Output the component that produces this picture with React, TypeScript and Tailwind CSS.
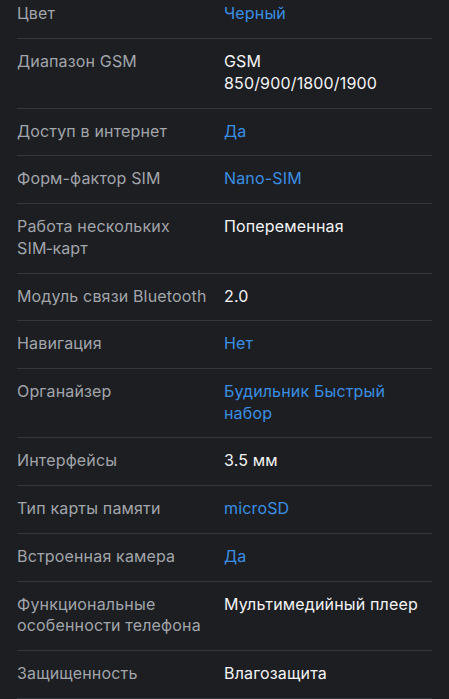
import React from "react";

type Row = { label: string; value: React.ReactNode; link?: boolean };

const rows: Row[] = [
  { label: "Цвет", value: "Черный", link: true },
  {
    label: "Диапазон GSM",
    value: (
      <>
        GSM
        <br />
        850/900/1800/1900
      </>
    ),
  },
  { label: "Доступ в интернет", value: "Да", link: true },
  { label: "Форм-фактор SIM", value: "Nano-SIM", link: true },
  { label: "Работа нескольких SIM\u2011карт", value: "Попеременная" },
  { label: "Модуль связи Bluetooth", value: "2.0" },
  { label: "Навигация", value: "Нет", link: true },
  { label: "Органайзер", value: "Будильник Быстрый набор", link: true },
  { label: "Интерфейсы", value: "3.5 мм" },
  { label: "Тип карты памяти", value: "microSD", link: true },
  { label: "Встроенная камера", value: "Да", link: true },
  { label: "Функциональные особенности телефона", value: "Мультимедийный плеер" },
  { label: "Защищенность", value: "Влагозащита" },
];

export default function App() {
  return (
    <div
      className="w-[449px] h-[699px] overflow-hidden bg-[#1c1e22] px-[17px]"
      style={{ fontFamily: "Inter, 'Noto Sans', sans-serif" }}
    >
      <div className="-mt-[8.6px] flex flex-col">
        {rows.map((r, i) => (
          <div
            key={i}
            className="grid grid-cols-[207px_1fr] pt-3 pb-[13.2px] border-b border-[#34373c] text-[16px] leading-[21.6px] tracking-[0.01em]"
          >
            <div className="text-[#a2a5aa] pr-2">{r.label}</div>
            <div className={r.link ? "text-[#3b8fe3]" : "text-[#f4f4f5]"}>{r.value}</div>
          </div>
        ))}
      </div>
    </div>
  );
}
